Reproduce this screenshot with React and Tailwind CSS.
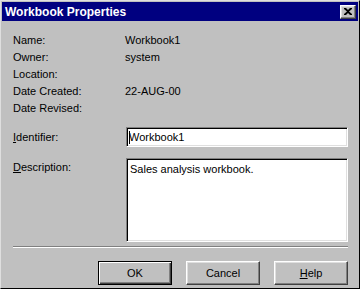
const bevelOut =
  "border border-t-white border-l-white border-r-[#404040] border-b-[#404040] shadow-[inset_-1px_-1px_0_#808080,inset_1px_1px_0_#dfdfdf]";
const bevelIn =
  "border border-t-[#808080] border-l-[#808080] border-r-white border-b-white shadow-[inset_1px_1px_0_#000,inset_-1px_-1px_0_#dfdfdf]";

function Row({ label, value }) {
  return (
    <div className="flex h-[17px] items-center">
      <div className="w-[112px]">{label}</div>
      <div>{value}</div>
    </div>
  );
}

function Btn({ children, def }) {
  return (
    <button
      className={
        "w-[74px] h-[24px] flex items-center justify-center bg-[#c0c0c0] " +
        (def
          ? "border border-black shadow-[inset_1px_1px_0_#fff,inset_-1px_-1px_0_#404040,inset_-2px_-2px_0_#808080]"
          : bevelOut)
      }
    >
      {children}
    </button>
  );
}

export default function App() {
  return (
    <div
      className="w-[360px] h-[289px] bg-[#c0c0c0] text-[11px] text-black overflow-hidden flex flex-col border border-t-[#dfdfdf] border-l-[#dfdfdf] border-r-black border-b-black p-[1px]"
      style={{ fontFamily: '"Liberation Sans", Arial, sans-serif' }}
    >
      <div className="h-[19px] bg-[#000080] flex items-center justify-between pl-[3px] pr-[2px]">
        <span className="text-white font-bold text-[12px]">Workbook Properties</span>
        <div className={"w-[16px] h-[14px] bg-[#c0c0c0] flex items-center justify-center " + bevelOut}>
          <svg width="8" height="7" viewBox="0 0 8 7">
            <path d="M0 0h2l2 2 2-2h2v1L5 3.5 8 6v1H6L4 5 2 7H0V6l3-2.5L0 1z" fill="#000" />
          </svg>
        </div>
      </div>

      <div className="flex flex-col pl-[11px] pr-[10px] pt-[11px]">
        <Row label="Name:" value="Workbook1" />
        <Row label="Owner:" value="system" />
        <Row label="Location:" value="" />
        <Row label="Date Created:" value="22-AUG-00" />
        <Row label="Date Revised:" value="" />

        <div className="flex mt-[10px] items-center">
          <div className="w-[113px]">
            <span className="underline">I</span>dentifier:
          </div>
          <div className={"flex-1 h-[20px] bg-white flex items-center pl-[2px] " + bevelIn}>
            <span className="w-[1px] h-[13px] bg-black mr-[-1px]"></span>
            Workbook1
          </div>
        </div>

        <div className="flex mt-[11px]">
          <div className="w-[113px] pt-[1px]">
            <span className="underline">D</span>escription:
          </div>
          <div className={"flex-1 h-[84px] bg-white px-[3px] pt-[2px] " + bevelIn}>
            Sales analysis workbook.
          </div>
        </div>

        <div className="mt-[4px] h-[2px] border-t border-t-[#808080] border-b border-b-white"></div>

        <div className="flex justify-end gap-[14px] mt-[13px]">
          <Btn def>OK</Btn>
          <Btn>Cancel</Btn>
          <Btn>
            <span>
              <span className="underline">H</span>elp
            </span>
          </Btn>
        </div>
      </div>
    </div>
  );
}
